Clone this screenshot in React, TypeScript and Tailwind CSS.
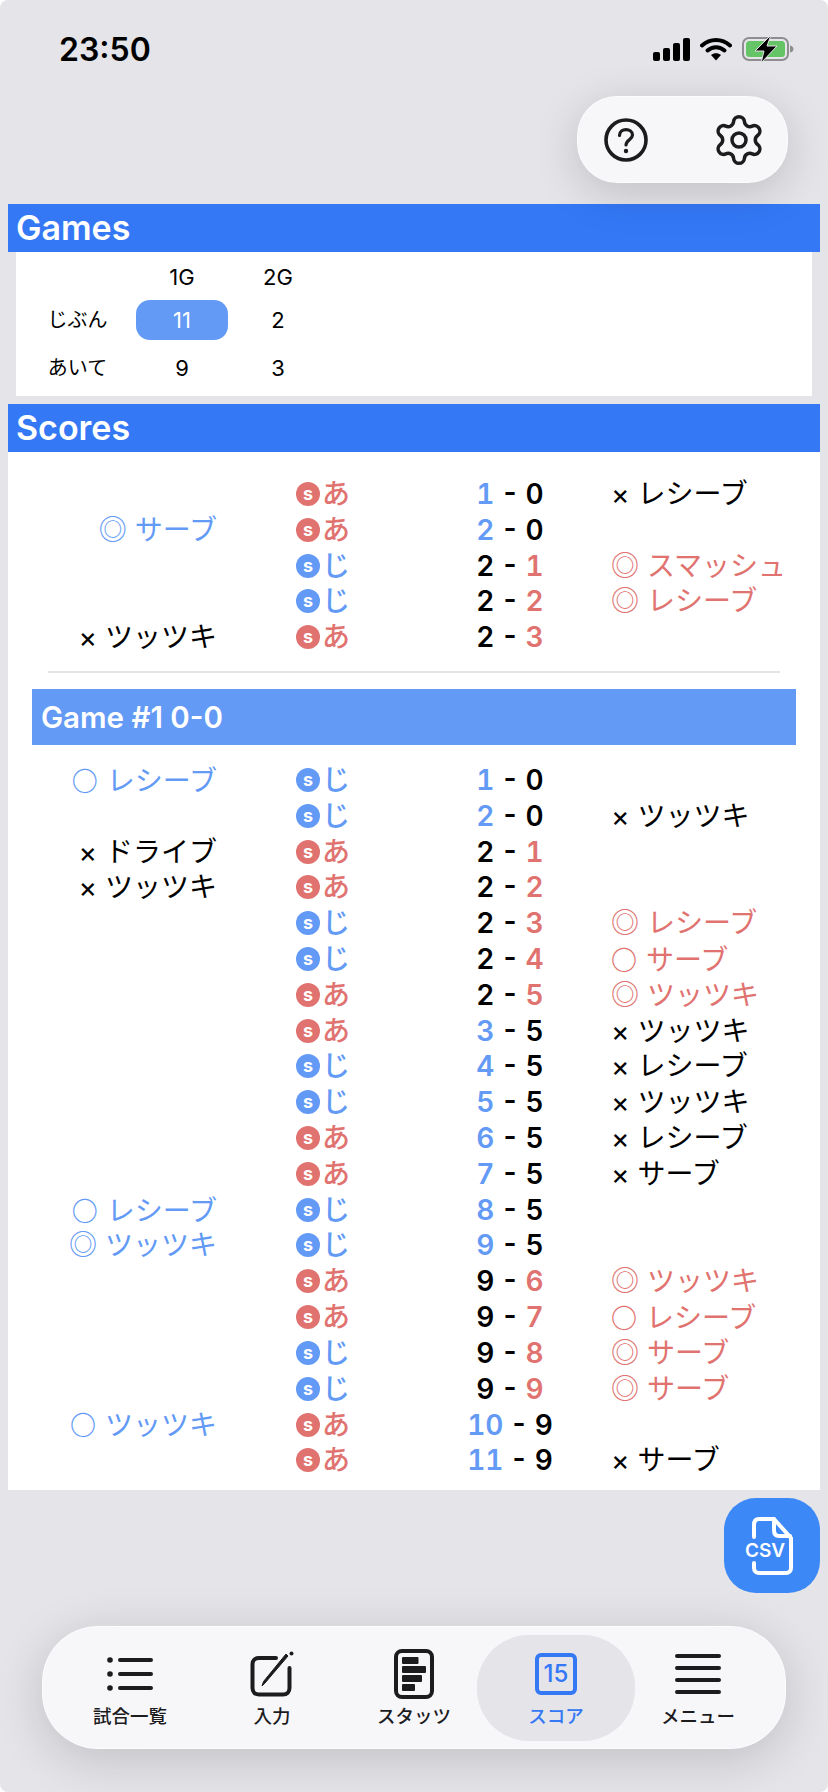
import { Settings } from "lucide-react";

const FONT = "font-['Inter','Noto_Sans_CJK_JP',sans-serif]";

type Row = [string, "あ" | "じ", number, number, "b" | "r", string];

const firstRows: Row[] = [
  ["", "あ", 1, 0, "b", "× レシーブ"],
  ["◎ サーブ", "あ", 2, 0, "b", ""],
  ["", "じ", 2, 1, "r", "◎ スマッシュ"],
  ["", "じ", 2, 2, "r", "◎ レシーブ"],
  ["× ツッツキ", "あ", 2, 3, "r", ""],
];

const gameRows: Row[] = [
  ["○ レシーブ", "じ", 1, 0, "b", ""],
  ["", "じ", 2, 0, "b", "× ツッツキ"],
  ["× ドライブ", "あ", 2, 1, "r", ""],
  ["× ツッツキ", "あ", 2, 2, "r", ""],
  ["", "じ", 2, 3, "r", "◎ レシーブ"],
  ["", "じ", 2, 4, "r", "○ サーブ"],
  ["", "あ", 2, 5, "r", "◎ ツッツキ"],
  ["", "あ", 3, 5, "b", "× ツッツキ"],
  ["", "じ", 4, 5, "b", "× レシーブ"],
  ["", "じ", 5, 5, "b", "× ツッツキ"],
  ["", "あ", 6, 5, "b", "× レシーブ"],
  ["", "あ", 7, 5, "b", "× サーブ"],
  ["○ レシーブ", "じ", 8, 5, "b", ""],
  ["◎ ツッツキ", "じ", 9, 5, "b", ""],
  ["", "あ", 9, 6, "r", "◎ ツッツキ"],
  ["", "あ", 9, 7, "r", "○ レシーブ"],
  ["", "じ", 9, 8, "r", "◎ サーブ"],
  ["", "じ", 9, 9, "r", "◎ サーブ"],
  ["○ ツッツキ", "あ", 10, 9, "b", ""],
  ["", "あ", 11, 9, "b", "× サーブ"],
];

// the circle mark has to come from the CJK font, Inter's own one is too small
function Play({ text }: { text: string }) {
  if (!text.startsWith("○")) return <>{text}</>;
  return (
    <>
      <span className="font-['Noto_Sans_CJK_JP'] font-bold text-[26px]">○</span>
      <span className="ml-[1px]">{text.slice(1)}</span>
    </>
  );
}

function ScoreRows({ rows }: { rows: Row[] }) {
  return (
    <div>
      {rows.map((r, i) => {
        const [left, who, me, them, side, right] = r;
        const leftColor = left.startsWith("×") ? "text-black" : "text-[#639af5]";
        const rightColor = right.startsWith("×") ? "text-black" : "text-[#e07370]";
        const whoColor = who === "じ" ? "text-[#639af5]" : "text-[#e07370]";
        const whoBg = who === "じ" ? "bg-[#639af5]" : "bg-[#e07370]";
        return (
          <div key={i} className="grid grid-cols-[209px_227px_132px_1fr] h-[35.8px] items-center text-[28px] leading-[36px]">
            <div className={`text-right whitespace-nowrap ${leftColor}`}><Play text={left} /></div>
            <div className={`pl-[79px] flex items-center gap-[2px] font-medium ${whoColor}`}>
              <span className={`w-6 h-6 rounded-full flex items-center justify-center text-white text-[18px] leading-none font-bold ${whoBg}`}>s</span>
              <span>{who}</span>
            </div>
            <div className="text-center font-semibold text-black whitespace-nowrap tabular-nums [word-spacing:-1px]">
              <span className={side === "b" ? "text-[#639af5]" : ""}>{me}</span>
              {" - "}
              <span className={side === "r" ? "text-[#e07370]" : ""}>{them}</span>
            </div>
            <div className={`pl-[35px] whitespace-nowrap ${rightColor}`}><Play text={right} /></div>
          </div>
        );
      })}
    </div>
  );
}

function SectionHeader({ title }: { title: string }) {
  return (
    <div className="h-12 bg-[#3478f6] flex items-center pl-2 text-white text-[34px] font-semibold leading-none">
      {title}
    </div>
  );
}

function StatusIcons() {
  return (
    <div className="flex items-center">
      <svg width="37" height="23" viewBox="0 0 37 23" className="mr-[10px]">
        <rect x="0" y="14" width="7" height="9" rx="2" fill="#000" />
        <rect x="10" y="10" width="7" height="13" rx="2" fill="#000" />
        <rect x="20" y="5" width="7" height="18" rx="2" fill="#000" />
        <rect x="30" y="0" width="7" height="23" rx="2" fill="#000" />
      </svg>
      <svg width="32" height="24" viewBox="0 0 32 24" className="mr-[10px]">
        <path d="M2 8.5C10 1 22 1 30 8.5" fill="none" stroke="#000" strokeWidth="4" strokeLinecap="round" />
        <path d="M7.5 13.5C12.5 9 19.5 9 24.5 13.5" fill="none" stroke="#000" strokeWidth="4" strokeLinecap="round" />
        <path d="M11 18L16 23.5L21 18C18 15.5 14 15.5 11 18Z" fill="#000" />
      </svg>
      <svg width="52" height="26" viewBox="0 0 52 26">
        <rect x="1" y="2" width="45" height="22" rx="6" fill="none" stroke="#8e8e90" strokeWidth="2" />
        <rect x="4" y="5" width="39" height="16" rx="3.5" fill="#65c466" />
        <path d="M48 9.5C50.5 10 51.5 11.5 51.5 13C51.5 14.5 50.5 16 48 16.5Z" fill="#8e8e90" />
        <path d="M29 -1L13 15H22L19 27L35 10H25Z" fill="#000" stroke="#e4e4e9" strokeWidth="1" />
      </svg>
    </div>
  );
}

function ListIcon() {
  return (
    <svg width="46" height="36" viewBox="0 0 46 36" fill="none" stroke="#1c1c1e" strokeWidth="4" strokeLinecap="round">
      <circle cx="3" cy="4" r="2.8" fill="#1c1c1e" stroke="none" />
      <circle cx="3" cy="18" r="2.8" fill="#1c1c1e" stroke="none" />
      <circle cx="3" cy="32" r="2.8" fill="#1c1c1e" stroke="none" />
      <path d="M13 4H44M13 18H44M13 32H44" />
    </svg>
  );
}

function ComposeIcon() {
  return (
    <svg width="46" height="46" viewBox="0 0 46 46" fill="none">
      <path d="M27 7H10C6 7 3.5 9.5 3.5 13V37C3.5 41 6 43.5 10 43.5H34C38 43.5 40.5 41 40.5 37V17" stroke="#1c1c1e" strokeWidth="4" strokeLinecap="round" />
      <path d="M39 5L16 32L13 35L14.5 30.5L37 3Z" fill="#1c1c1e" stroke="#1c1c1e" strokeWidth="1" />
      <circle cx="42.5" cy="2.5" r="2" fill="#1c1c1e" />
    </svg>
  );
}

function StatsIcon() {
  return (
    <svg width="40" height="50" viewBox="0 0 40 50" fill="none">
      <rect x="2" y="2" width="36" height="46" rx="6" stroke="#1c1c1e" strokeWidth="4" />
      <rect x="8" y="8" width="16.5" height="7" rx="1" fill="#1c1c1e" />
      <rect x="8" y="17" width="24" height="7" rx="1" fill="#1c1c1e" />
      <rect x="8" y="26" width="20" height="7" rx="1" fill="#1c1c1e" />
      <rect x="8" y="35" width="13" height="7" rx="1" fill="#1c1c1e" />
    </svg>
  );
}

function MenuIcon() {
  return (
    <svg width="46" height="42" viewBox="0 0 46 42" fill="none" stroke="#1c1c1e" strokeWidth="4" strokeLinecap="round">
      <path d="M2 3H44M2 15H44M2 27H44M2 39H44" />
    </svg>
  );
}

function TabItem({ label, active, children }: { label: string; active?: boolean; children: React.ReactNode }) {
  return (
    <div className="relative w-[142px] h-full flex flex-col items-center">
      {active && <div className="absolute -inset-x-2 top-2 bottom-[7px] rounded-[52px] bg-[#e4e4e9]"></div>}
      <div className="relative h-[50px] mt-[22px] mb-[5px] flex items-center justify-center">{children}</div>
      <div className={`relative text-[18.5px] leading-6 font-medium whitespace-nowrap ${active ? "text-[#3478f6]" : "text-[#1c1c1e]"}`}>
        {label}
      </div>
    </div>
  );
}

export default function App() {
  return (
    <div className={`min-h-screen bg-white ${FONT}`}>
      <div className="relative h-[1792px] rounded-[8px] bg-[#e4e4e9] overflow-hidden">
        {/* status bar */}
        <div className="h-[96px] pl-[59px] pr-[34px] flex items-start justify-between pt-[32px]">
          <div className="text-[32px] leading-9 font-semibold text-black">23:50</div>
          <div className="pt-[4px]"><StatusIcons /></div>
        </div>

        {/* help and settings pill */}
        <div className="relative z-10 ml-auto mr-[40px] w-[211px] h-[87px] rounded-[40px] bg-[#f7f7fa] border border-white/60 shadow-[0_10px_45px_rgba(0,0,0,0.16)] flex items-center pl-[26px]">
          <svg width="44" height="44" viewBox="0 0 44 44" fill="none" stroke="#1c1c1e">
            <circle cx="22" cy="22" r="20" strokeWidth="3.6" />
            <path d="M15.5 17.5C15.5 9.5 28.5 10 28.5 17C28.5 21.5 22 22 22 27" strokeWidth="3.2" strokeLinecap="round" />
            <circle cx="22" cy="33" r="2.2" fill="#1c1c1e" stroke="none" />
          </svg>
          <Settings size={56} strokeWidth={1.5} className="ml-[63px] text-[#1c1c1e]" />
        </div>

        <div className="mt-[21px] px-2">
          <SectionHeader title="Games" />
          <div className="mx-2 h-[144px] bg-white pl-[3px] pt-[5px] text-[22px] text-black">
            <div className="grid grid-cols-[117px_92px_100px] grid-rows-[40px_46px_50px] items-center text-center">
              <div></div>
              <div>1G</div>
              <div>2G</div>
              <div className="text-[20px]">じぶん</div>
              <div className="h-10 rounded-[14px] bg-[#639af5] text-white flex items-center justify-center">11</div>
              <div>2</div>
              <div className="text-[20px]">あいて</div>
              <div>9</div>
              <div>3</div>
            </div>
          </div>

          <div className="mt-2">
            <SectionHeader title="Scores" />
          </div>
          <div className="h-[1038px] bg-white pt-6">
            <ScoreRows rows={firstRows} />
            <div className="mx-[40px] mt-4 h-[2px] bg-[#e4e4e7]"></div>
            <div className="mx-6 mt-4 h-14 bg-[#639af5] pl-[9px] flex items-center text-white text-[29.5px] font-semibold">
              Game #1 0-0
            </div>
            <div className="pt-[17px]">
              <ScoreRows rows={gameRows} />
            </div>
          </div>
        </div>

        {/* csv button */}
        <div className="absolute left-[724px] top-[1498px] w-24 h-[95px] rounded-[32px] bg-[#3c88f7] flex items-center justify-center">
          <svg width="42" height="58" viewBox="0 0 42 58" fill="none" stroke="#fff" strokeWidth="4" strokeLinejoin="round" strokeLinecap="round">
            <path d="M3 20V8C3 4 5 2 8 2H23L40 21V51C40 54 38 56 35 56H8C5 56 3 54 3 51V46" />
            <path d="M23 2V13C23 17 25 19 28 19H39" strokeWidth="4" />
          </svg>
          <span className="absolute left-[21px] top-[41px] text-[19px] leading-6 font-semibold text-white">CSV</span>
        </div>

        {/* tab bar */}
        <div className="absolute left-[42px] top-[1626px] w-[744px] h-[123px] rounded-[56px] bg-[#f7f7fa] border border-white/60 shadow-[0_10px_50px_rgba(0,0,0,0.16)] flex px-[16px]">
          <TabItem label="試合一覧"><ListIcon /></TabItem>
          <TabItem label="入力"><ComposeIcon /></TabItem>
          <TabItem label="スタッツ"><StatsIcon /></TabItem>
          <TabItem label="スコア" active>
            <div className="w-[42px] h-[42px] rounded-[6px] border-4 border-[#3478f6] flex items-center justify-center text-[#3478f6] text-[24px] font-medium leading-none">15</div>
          </TabItem>
          <TabItem label="メニュー"><MenuIcon /></TabItem>
        </div>
      </div>
    </div>
  );
}
